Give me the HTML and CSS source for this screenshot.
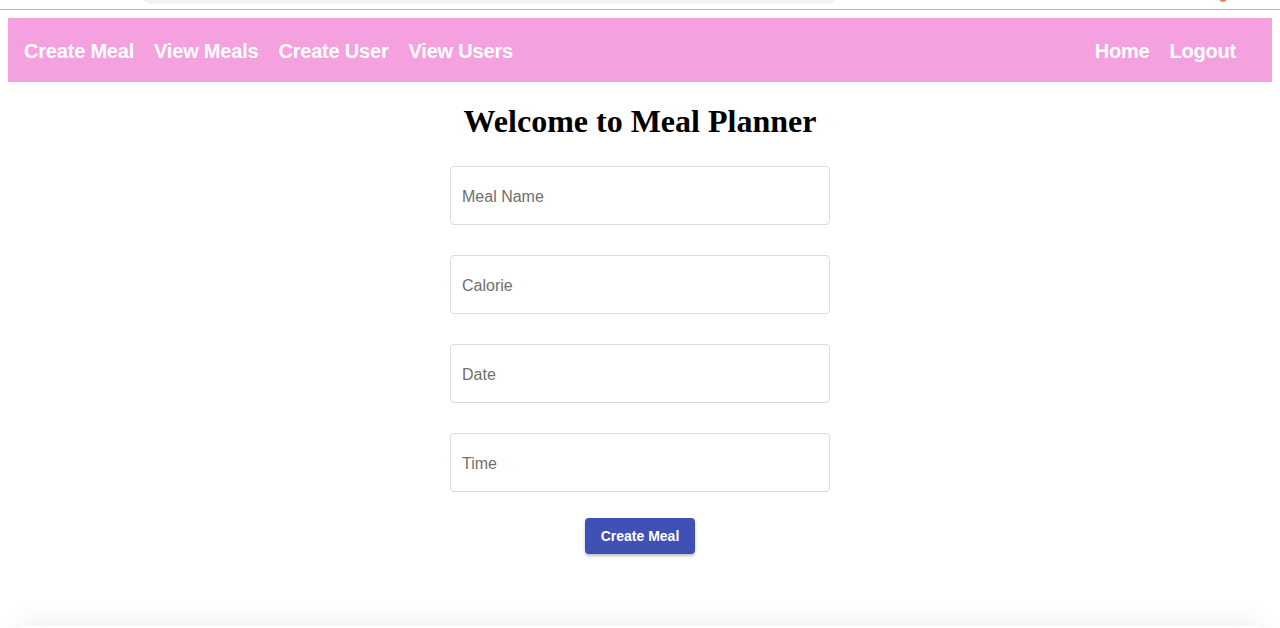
FILE: index.html
```html
<!DOCTYPE html>
<html>
<head>
<meta charset="utf-8">
<title>Meal Planner</title>
<link rel="stylesheet" href="styles.css">
</head>
<body>
<div class="chrome">
  <div class="urlbar"></div>
  <div class="ext"></div>
</div>
<div class="page">
  <nav class="nav">
    <div class="nav-left">
      <a class="nav-link" href="#">Create Meal</a>
      <a class="nav-link" href="#">View Meals</a>
      <a class="nav-link" href="#">Create User</a>
      <a class="nav-link" href="#">View Users</a>
    </div>
    <div class="nav-right">
      <a class="nav-link" href="#">Home</a>
      <a class="nav-link" href="#">Logout</a>
    </div>
  </nav>
  <h1 class="title">Welcome to Meal Planner</h1>
  <form class="form">
    <input class="field" type="text" placeholder="Meal Name">
    <input class="field" type="text" placeholder="Calorie">
    <input class="field" type="text" placeholder="Date">
    <input class="field" type="text" placeholder="Time">
    <button class="btn" type="button">Create Meal</button>
  </form>
  <div class="card"></div>
</div>
</body>
</html>
```

FILE: styles.css
```css
html, body {
  margin: 0;
  padding: 0;
  background: #ffffff;
  overflow: hidden;
}

.chrome {
  position: relative;
  height: 9px;
  border-bottom: 1px solid #b3b3b3;
  background: #ffffff;
}

.urlbar {
  position: absolute;
  left: 143px;
  top: -10px;
  width: 693px;
  height: 14px;
  background: #f1f3f4;
  border-radius: 0 0 8px 8px;
}

.ext {
  position: absolute;
  left: 1219px;
  top: -6px;
  width: 8px;
  height: 8px;
  border-radius: 50%;
  background: #e0885a;
}

.page {
  margin: 8px;
}

.nav {
  display: flex;
  justify-content: space-between;
  align-items: center;
  height: 64px;
  background: #f5a1df;
  padding: 2px 36px 0 16px;
  box-sizing: border-box;
}

.nav-left, .nav-right {
  display: flex;
  gap: 20px;
}

.nav-link {
  font-family: "Liberation Sans", Arial, Helvetica, sans-serif;
  font-weight: bold;
  font-size: 20px;
  letter-spacing: -0.2px;
  color: #ffffff;
  text-decoration: none;
  line-height: 24px;
}

.title {
  font-family: "Liberation Serif", "Times New Roman", serif;
  font-weight: bold;
  font-size: 32px;
  text-align: center;
  margin: 21px 0 0 0;
  line-height: 37px;
}

.form {
  display: flex;
  flex-direction: column;
  align-items: center;
  gap: 30px;
  margin-top: 26px;
}

.field {
  box-sizing: border-box;
  width: 380px;
  height: 59px;
  border: 1px solid #dcdcdc;
  border-radius: 4px;
  padding: 2px 11px 0;
  font-family: "Liberation Sans", Arial, Helvetica, sans-serif;
  font-size: 16px;
  color: #333;
  outline: none;
}

.field::placeholder {
  color: #6f6f6f;
}

.btn {
  margin-top: -4px;
  width: 110px;
  height: 36px;
  border: none;
  border-radius: 4px;
  background: #3f51b5;
  color: #ffffff;
  font-family: "Liberation Sans", Arial, Helvetica, sans-serif;
  font-weight: bold;
  font-size: 14px;
  box-shadow: 0 2px 3px rgba(0, 0, 0, 0.25);
  cursor: pointer;
}

.card {
  margin: 72px 12px 0;
  height: 20px;
  background: #ffffff;
  box-shadow: 0 -2px 28px rgba(0, 0, 0, 0.09);
}
```
